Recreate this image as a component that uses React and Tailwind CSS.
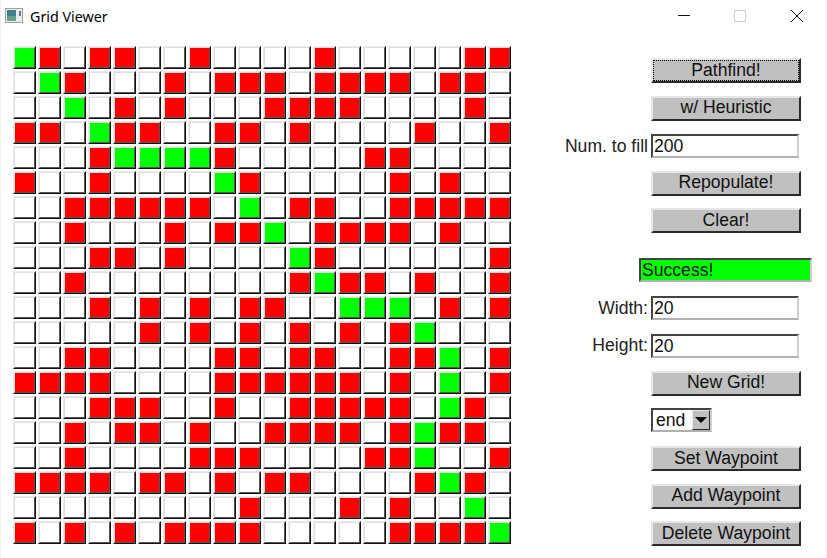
const FONT = "font-['Liberation_Sans',Arial,sans-serif]"

const GRID = [
  'gr.rr..r....r.....rr',
  '.gr...r.rrr.rrrr.rr.',
  '..g.r.r...rrrr....r.',
  'rr.grr..rr.r....r..r',
  '...rggggr.....rr....',
  'r..r....gr.....r.r..',
  '..rrrrrr.g.rr..rrrrr',
  '..r...r.rrg.rrrr.r..',
  '...rr.r....gr......r',
  '..r........rgrr.r..r',
  '...r.r.r.rr..ggg.r.r',
  '.....r.r.r.r.r.rg...',
  '..rr....rr.rr..rrg.r',
  'rrrr....rrrrrr.r.g.r',
  '...rrr..r..rrrrr.gr.',
  '..r.rr.r..rrrr.rgrr.',
  '..r....rrr....rrg..r',
  'rrrr.rr.r.rr....rgr.',
  '.........r...r.r..g.',
  'r.r.r.rrrr.....rrrrg',
]

const CELL_COLORS = {
  r: 'bg-[#ff0000]',
  g: 'bg-[#00ff00]',
  '.': 'bg-white',
}

function Cell({ value }) {
  return (
    <div className="w-[23px] h-[23px] border border-t-[#ececec] border-l-[#ececec] border-r-[#111111] border-b-[#111111]">
      <div className={`w-full h-full border border-t-[#dedede] border-l-[#dedede] border-r-[#555555] border-b-[#555555] ${CELL_COLORS[value]}`} />
    </div>
  )
}

function Button({ children, focused }) {
  return (
    <button className="relative shrink-0 w-[150px] h-[25px] bg-[#c0c0c0] border-2 border-t-[#e6e6e6] border-l-[#e6e6e6] border-r-[#2a2a2a] border-b-[#2a2a2a] text-[17.6px] leading-none text-[#111111]">
      {focused && <span className="absolute inset-0 border border-dotted border-black" />}
      {children}
    </button>
  )
}

function Field({ label, value }) {
  return (
    <div className="flex items-center justify-end h-[25px]">
      <span className="mr-[3px] text-[17.6px] text-[#222222]">{label}</span>
      <div className="w-[148px] h-[24px] mr-[2px] pl-[1px] bg-white border-2 border-t-[#444444] border-l-[#444444] border-r-[#d0d0d0] border-b-[#b0b0b0] text-[17.6px] leading-[20px] text-[#111111]">
        {value}
      </div>
    </div>
  )
}

export default function App() {
  return (
    <div className={`${FONT} w-[827px] h-[558px] bg-white overflow-hidden border-l border-r border-[#eeeeee]`}>
      {/* Title bar */}
      <div className="flex items-center h-[33px] pl-[4px]">
        <svg width="18" height="15" viewBox="0 0 18 15" className="mr-[7px] mb-[2px] shrink-0">
          <rect x="0.5" y="0.5" width="17" height="14" fill="#ececec" stroke="#a0a0a0" />
          <rect x="2" y="2" width="9" height="11" fill="#3f7f8f" />
          <rect x="2" y="8" width="9" height="5" fill="#6aa08a" />
          <rect x="14" y="3" width="2" height="5" fill="#5f7f8f" />
        </svg>
        <span className="text-[14.3px] font-['Noto_Sans',sans-serif] text-black">Grid Viewer</span>
        <svg width="126" height="13" viewBox="0 0 126 13" className="ml-auto mr-[22px]">
          <path d="M0 5.5H12" stroke="#111111" />
          <rect x="56.5" y="0.5" width="11" height="11" fill="none" stroke="#cccccc" />
          <path d="M113 0L125 12M125 0L113 12" stroke="#111111" />
        </svg>
      </div>

      <div className="flex">
        {/* Grid */}
        <div className="ml-[12px] mt-[13px] grid grid-cols-[repeat(20,23px)] gap-[2px] w-[498px] h-fit">
          {GRID.flatMap((row, r) =>
            row.split('').map((value, c) => <Cell key={`${r}-${c}`} value={value} />)
          )}
        </div>

        {/* Controls */}
        <div className="ml-[51px] mt-[25px] w-[240px] flex flex-col gap-[12.6px] items-end pr-[1px]">
          <Button focused>Pathfind!</Button>
          <Button>w/ Heuristic</Button>
          <Field label="Num. to fill" value="200" />
          <Button>Repopulate!</Button>
          <Button>Clear!</Button>
          <div className="shrink-0 w-[173px] h-[24px] mt-[12px] mb-[1px] mr-[-11px] pl-[1px] bg-[#00ff00] border-2 border-t-[#444444] border-l-[#444444] border-r-[#d0d0d0] border-b-[#b0b0b0] text-[17.6px] leading-[20px] text-[#111111]">
            Success!
          </div>
          <Field label="Width:" value="20" />
          <Field label="Height:" value="20" />
          <Button>New Grid!</Button>
          <div className="w-[150px] flex mb-[1px]">
            <div className="flex items-center w-[61px] h-[24px] bg-white border-2 border-t-[#444444] border-l-[#444444] border-r-[#d0d0d0] border-b-[#b0b0b0] text-[17.6px] text-[#111111]">
              <span className="pl-[3px] flex-1 leading-none">end</span>
              <span className="flex items-center justify-center w-[18px] h-[20px] bg-[#c0c0c0] border border-t-[#e6e6e6] border-l-[#e6e6e6] border-r-[#2a2a2a] border-b-[#2a2a2a]">
                <span className="w-0 h-0 border-l-[6px] border-r-[6px] border-t-[6px] border-l-transparent border-r-transparent border-t-black" />
              </span>
            </div>
          </div>
          <Button>Set Waypoint</Button>
          <Button>Add Waypoint</Button>
          <Button>Delete Waypoint</Button>
        </div>
      </div>
    </div>
  )
}
